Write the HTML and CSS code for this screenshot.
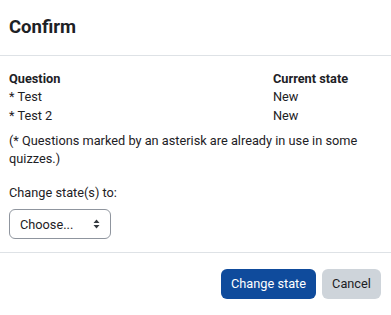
FILE: index.html
```
<!DOCTYPE html>
<html>
<head>
<meta charset="utf-8">
<link rel="stylesheet" href="styles.css">
</head>
<body>
<div class="modal">
  <div class="modal-header">
    <h5 class="title">Confirm</h5>
  </div>
  <div class="modal-body">
    <table class="qtable">
      <thead>
        <tr><th class="col-q">Question</th><th>Current state</th></tr>
      </thead>
      <tbody>
        <tr><td>* Test</td><td>New</td></tr>
        <tr><td>* Test 2</td><td>New</td></tr>
      </tbody>
    </table>
    <p class="note">(* Questions marked by an asterisk are already in use in some quizzes.)</p>
    <label class="label">Change state(s) to:</label>
    <div class="select">
      <span>Choose...</span>
      <svg class="caret" width="7" height="10" viewBox="0 0 7 10"><path d="M3.5 0.5 L6.5 4 L0.5 4 Z M3.5 9.5 L6.5 6 L0.5 6 Z" fill="#343a40"/></svg>
    </div>
  </div>
  <div class="modal-footer">
    <button class="btn btn-primary">Change state</button>
    <button class="btn btn-secondary">Cancel</button>
  </div>
</div>
</body>
</html>
```
FILE: styles.css
```
html, body {
  margin: 0;
  padding: 0;
  background: #fff;
}
body {
  font-family: Roboto, "Liberation Sans", sans-serif;
  font-size: 12.75px;
  color: #1d2125;
  width: 391px;
}
.modal {
  display: flex;
  flex-direction: column;
}
.modal-header {
  height: 56px;
  box-sizing: border-box;
  border-bottom: 1px solid #dee2e6;
  display: flex;
  align-items: center;
  padding: 0 9px;
}
.title {
  margin: 0;
  font-size: 18.5px;
  font-weight: 700;
  line-height: 1.2;
}
.modal-body {
  padding: 14px 9px 13px;
}
.qtable {
  border-collapse: collapse;
  width: 100%;
}
.qtable th, .qtable td {
  padding: 0;
  text-align: left;
  line-height: 18.25px;
  vertical-align: top;
  white-space: nowrap;
}
.qtable th {
  font-weight: 700;
}
.col-q {
  width: 264px;
}
.note {
  margin: 7px 0 0;
  line-height: 18.5px;
}
.label {
  display: block;
  margin-top: 15px;
  line-height: 18.5px;
}
.select {
  margin-top: 7px;
  width: 102px;
  height: 30px;
  box-sizing: border-box;
  border: 1px solid #8f959e;
  border-radius: 6px;
  display: flex;
  align-items: center;
  justify-content: space-between;
  padding: 0 10px 0 10px;
}
.modal-footer {
  border-top: 1px solid #dee2e6;
  display: flex;
  justify-content: flex-end;
  gap: 6px;
  padding: 16px 10px 16px;
}
.btn {
  font-family: inherit;
  font-size: 12.75px;
  height: 30px;
  border: none;
  border-radius: 6px;
  padding: 0;
  line-height: 30px;
  white-space: nowrap;
}
.btn-primary {
  background: #0f4b9c;
  color: #fff;
  width: 95px;
}
.btn-secondary {
  background: #ced4da;
  color: #1d2125;
  width: 59px;
}
```
